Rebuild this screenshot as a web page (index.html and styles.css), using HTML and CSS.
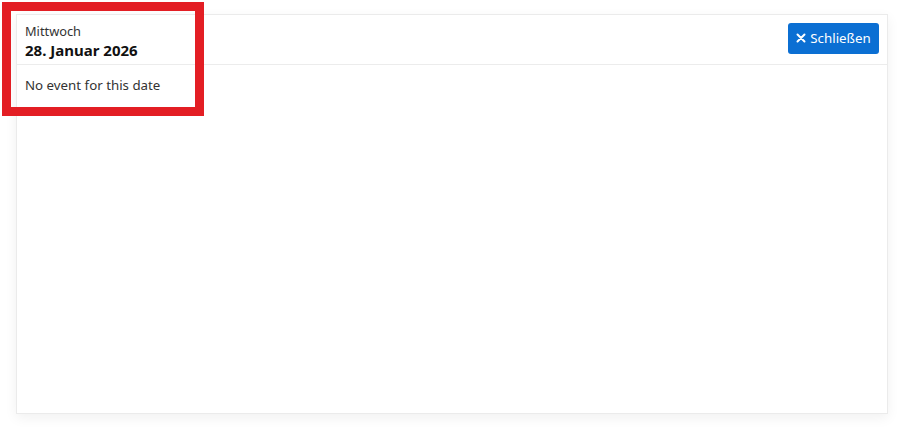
FILE: index.html
```html
<!DOCTYPE html>
<html lang="de">
<head>
<meta charset="utf-8">
<title>Kalender</title>
<link rel="stylesheet" href="styles.css">
</head>
<body>
<div class="page">
  <div class="card">
    <div class="card-header">
      <div class="date-block">
        <div class="weekday">Mittwoch</div>
        <div class="date">28. Januar 2026</div>
      </div>
      <button class="btn-close" type="button"><svg class="x" width="10" height="10" viewBox="0 0 10 10"><path d="M1.5 1.5 L8.5 8.5 M8.5 1.5 L1.5 8.5" stroke="#fff" stroke-width="2" stroke-linecap="round"/></svg>Schließen</button>
    </div>
    <div class="card-body">
      <p class="empty">No event for this date</p>
    </div>
  </div>
  <div class="highlight"></div>
</div>
</body>
</html>
```
FILE: styles.css
```css
* { box-sizing: border-box; }
html, body { margin: 0; padding: 0; background: #ffffff; }
body {
  font-family: "Noto Sans", "Open Sans", sans-serif;
  color: #333333;
}
.page {
  position: relative;
  padding: 14px 18px 14px 16px;
}
.card {
  height: 400px;
  border: 1px solid #ebebeb;
  background: #fff;
  box-shadow: 0 4px 12px rgba(0,0,0,0.06);
  display: flex;
  flex-direction: column;
}
.card-header {
  height: 50px;
  border-bottom: 1px solid #ececec;
  display: flex;
  align-items: flex-start;
  justify-content: space-between;
  padding: 8px 8px 0 8px;
}
.weekday {
  font-size: 12.8px;
  line-height: 17px;
  color: #333;
}
.date {
  font-size: 15px;
  font-weight: 700;
  line-height: 20px;
  color: #111;
}
.btn-close {
  font-family: inherit;
  background: #0b6fd3;
  color: #fff;
  border: none;
  border-radius: 3px;
  height: 31px;
  width: 91px;
  font-size: 13.3px;
  padding: 0 0 1px 0;
  display: flex;
  align-items: center;
  justify-content: center;
  gap: 4px;
}
.btn-close .x { display: block; }
.card-body { padding: 11px 8px; }
.empty {
  margin: 0;
  font-size: 13.3px;
  line-height: 18px;
  color: #333;
}
.highlight {
  position: absolute;
  left: 2px;
  top: 2px;
  width: 202px;
  height: 114px;
  border: 9px solid #e31e24;
  pointer-events: none;
}
```
